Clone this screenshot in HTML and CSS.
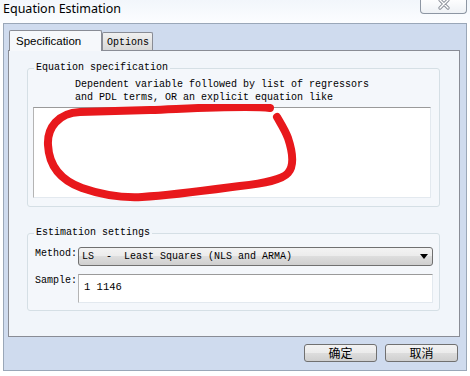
FILE: index.html
```html
<!DOCTYPE html>
<html lang="en">
<head>
  <meta charset="UTF-8">
  <title>Equation Estimation</title>
  <link rel="stylesheet" href="styles.css">
</head>
<body>
  <!-- Barra de título -->
  <div class="titlebar">
    <span class="title">Equation Estimation</span>
    <div class="close">
      <svg width="14" height="11" viewBox="0 0 14 11">
        <path d="M3 0 L11 8 M11 0 L3 8" stroke="#8a8f98" stroke-width="3.2" stroke-linecap="round"/>
        <path d="M3 0 L11 8 M11 0 L3 8" stroke="#ffffff" stroke-width="1.4" stroke-linecap="round"/>
      </svg>
    </div>
  </div>

  <!-- Ventana del diálogo -->
  <div class="window">
    <div class="tabs">
      <div class="tab tab-active">Specification</div>
      <div class="tab tab-idle">Options</div>
    </div>

    <div class="panel">
      <fieldset class="group group-spec">
        <legend>Equation specification</legend>
        <p class="hint">Dependent variable followed by list of regressors
and PDL terms, OR an explicit equation like</p>
        <div class="edit edit-big">
          <svg class="scribble" width="270" height="100" viewBox="33 104 270 100">
            <path d="M270 108 C250 105, 200 108, 150 110 L80 112 C58 113, 47 128, 48 145 C49 165, 60 180, 82 188 C102 195, 122 198, 142 197 C175 195, 210 190, 240 186 C265 183, 282 180, 288 173 C295 165, 292 150, 288 138 C285 130, 281 124, 277 117"
                  fill="none" stroke="#e8181c" stroke-width="8" stroke-linecap="round" stroke-linejoin="round"/>
          </svg>
        </div>
      </fieldset>

      <fieldset class="group group-est">
        <legend>Estimation settings</legend>
        <div class="form-grid">
          <label class="field-label">Method:</label>
          <div class="combo">
            <span class="combo-text">LS  -  Least Squares (NLS and ARMA)</span>
            <svg width="8" height="5" viewBox="0 0 8 5"><path d="M0 0 L8 0 L4 5 Z" fill="#000"/></svg>
          </div>
          <label class="field-label">Sample:</label>
          <div class="edit edit-sample">1 1146</div>
        </div>
      </fieldset>
    </div>

    <div class="actions">
      <button class="btn">确定</button>
      <button class="btn">取消</button>
    </div>
  </div>
</body>
</html>
```

FILE: styles.css
```css
/* Página */
body {
  margin: 0;
  width: 470px;
  height: 376px;
  overflow: hidden;
  background: #ffffff;
  font-family: "Liberation Mono", monospace;
  font-size: 10px;
  color: #000000;
}

/* Barra de título */
.titlebar {
  display: flex;
  justify-content: space-between;
  height: 23px;
  background: linear-gradient(#f2f6fb, #fcfdff);
}
.title {
  font-family: "Noto Sans", sans-serif;
  font-size: 12.5px;
  line-height: 18px;
  padding-left: 3px;
}
.close {
  width: 47px;
  height: 14px;
  box-sizing: border-box;
  margin-right: 3px;
  border: 1px solid #8d96a3;
  border-top: none;
  border-radius: 0 0 4px 4px;
  background: linear-gradient(#fdfdfe, #eef1f5);
  display: flex;
  justify-content: center;
}

/* Ventana */
.window {
  margin-left: 3px;
  width: 464px;
  height: 348px;
  box-sizing: border-box;
  border: 1px solid #9aa7b8;
  background: #cfdbee;
  display: flex;
  flex-direction: column;
}

/* Pestañas */
.tabs {
  display: flex;
  align-items: flex-end;
  height: 20px;
  margin: 6px 0 0 5px;
}
.tab {
  box-sizing: border-box;
  border: 1px solid #898c95;
  border-bottom: none;
  border-radius: 2px 2px 0 0;
}
.tab-active {
  position: relative;
  z-index: 1;
  width: 93px;
  height: 21px;
  margin-bottom: -1px;
  padding: 2px 0 0 6px;
  background: #f6f8fb;
  font-family: "Liberation Sans", sans-serif;
  font-size: 11.5px;
  line-height: 16px;
}
.tab-idle {
  width: 51px;
  height: 18px;
  padding: 3px 0 0 4px;
  background: linear-gradient(#f0f0f0, #d8d8d8);
  line-height: 13px;
}

/* Panel de contenido */
.panel {
  margin-left: 4px;
  width: 452px;
  height: 287px;
  box-sizing: border-box;
  border: 1px solid #898c95;
  background: #f1f5fa;
  padding: 11px 0 0 18px;
}

/* Cuadros de grupo */
.group {
  width: 413px;
  box-sizing: border-box;
  margin: 0;
  border: 1px solid #d5dfe5;
  border-radius: 3px;
  background: #f4f7fb;
}
.group legend {
  margin-left: 1px;
  padding: 0 2px;
  line-height: 12px;
}
.group-spec {
  padding: 0 8px 8px 5px;
}
.group-est {
  margin-top: 20px;
  padding: 0 6px 7px 5px;
}
.hint {
  margin: 4px 0 3px 42px;
  line-height: 13px;
  white-space: pre;
}

/* Campos de edición */
.edit {
  box-sizing: border-box;
  background: #ffffff;
  border: 1px solid #e3e9ef;
  border-top-color: #9a9a9a;
  border-left-color: #b4b4b4;
}
.edit-big {
  position: relative;
  width: 398px;
  height: 91px;
}
.scribble {
  position: absolute;
  left: -1px;
  top: -4px;
  pointer-events: none;
}

.form-grid {
  display: grid;
  grid-template-columns: 45px 355px;
  row-gap: 8px;
  margin-top: 8px;
}
.field-label {
  padding: 1px 0 0 2px;
  line-height: 12px;
}
.combo {
  height: 19px;
  box-sizing: border-box;
  border: 1px solid #707070;
  border-radius: 3px;
  padding: 0 4px 0 3px;
  display: flex;
  justify-content: space-between;
  align-items: center;
  background: linear-gradient(#f3f3f3 0%, #ebebeb 50%, #dddddd 50%, #cfcfcf 100%);
}
.combo-text {
  white-space: pre;
}
.edit-sample {
  height: 29px;
  padding: 6px 0 0 5px;
  font-size: 10.5px;
  line-height: 12px;
}

/* Botones */
.actions {
  display: flex;
  justify-content: flex-end;
  gap: 8px;
  margin: 7px 8px 0 0;
}
.btn {
  width: 73px;
  height: 18px;
  padding: 0;
  border: 1px solid #707070;
  border-radius: 3px;
  background: linear-gradient(#f2f2f2 0%, #ebebeb 50%, #dddddd 50%, #cfcfcf 100%);
  font-family: "Noto Sans CJK SC", sans-serif;
  font-size: 12px;
  line-height: 16px;
  color: #000000;
}
```
